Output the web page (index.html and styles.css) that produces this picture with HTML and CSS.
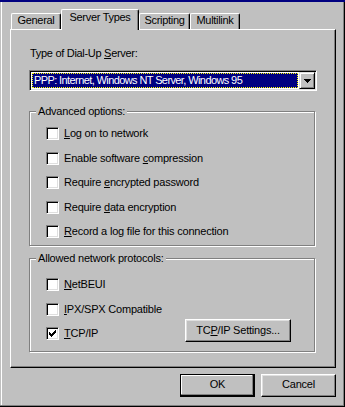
FILE: index.html
```html
<!DOCTYPE html>
<html>
<head>
<meta charset="utf-8">
<link rel="stylesheet" href="styles.css">
</head>
<body>
<div class="window">
  <div class="titlebar"></div>
  <div class="client">
    <div class="tabs">
      <div class="tab tab-general">General</div>
      <div class="tab tab-server active">Server Types</div>
      <div class="tab tab-scripting">Scripting</div>
      <div class="tab tab-multilink">Multilink</div>
    </div>
    <div class="panel">
      <div class="field-label">Type of Dial-Up <u>S</u>erver:</div>
      <div class="combo">
        <div class="combo-field"><span class="combo-sel">PPP: Internet, Windows NT Server, Windows 95</span></div>
        <div class="combo-btn"><svg width="7" height="4" viewBox="0 0 7 4" shape-rendering="crispEdges"><path d="M0 0H7V1H6V2H5V3H4V4H3V3H2V2H1V1H0Z" fill="#000"/></svg></div>
      </div>
      <div class="group group-adv">
        <div class="group-title">Advanced options:</div>
        <div class="rows">
          <div class="row"><span class="cb"></span><span class="cb-label"><u>L</u>og on to network</span></div>
          <div class="row"><span class="cb"></span><span class="cb-label">Enable software <u>c</u>ompression</span></div>
          <div class="row"><span class="cb"></span><span class="cb-label">Require <u>e</u>ncrypted password</span></div>
          <div class="row"><span class="cb"></span><span class="cb-label">Require <u>d</u>ata encryption</span></div>
          <div class="row"><span class="cb"></span><span class="cb-label"><u>R</u>ecord a log file for this connection</span></div>
        </div>
      </div>
      <div class="group group-proto">
        <div class="group-title">Allowed network protocols:</div>
        <div class="rows">
          <div class="row"><span class="cb"></span><span class="cb-label"><u>N</u>etBEUI</span></div>
          <div class="row"><span class="cb"></span><span class="cb-label"><u>I</u>PX/SPX Compatible</span></div>
          <div class="row"><span class="cb"><svg width="7" height="7" viewBox="0 0 7 7" shape-rendering="crispEdges"><path d="M6 0H7V3H6V4H5V5H4V6H3V7H2V6H1V5H0V2H1V3H2V4H3V3H4V2H5V1H6Z" fill="#000"/></svg></span><span class="cb-label"><u>T</u>CP/IP</span><span class="btn btn-settings">TC<u>P</u>/IP Settings...</span></div>
        </div>
      </div>
    </div>
    <div class="actions">
      <span class="btn btn-dialog btn-default">OK</span>
      <span class="btn btn-dialog">Cancel</span>
    </div>
  </div>
</div>
</body>
</html>
```
FILE: styles.css
```css
* { box-sizing: border-box; margin: 0; padding: 0; }
html, body { width: 345px; height: 407px; overflow: hidden; background: #c0c0c0; }
body {
  font-family: "Liberation Sans", Arial, sans-serif;
  font-size: 11px;
  line-height: 13px;
  color: #000;
  letter-spacing: -0.2px;
}
u { text-decoration: underline; text-underline-offset: 1px; }

.window {
  width: 345px;
  height: 407px;
  background: #c0c0c0;
  box-shadow: inset -1px -1px 0 #000, inset -2px -2px 0 #808080, inset 1px 0 0 #c0c0c0, inset 2px 0 0 #fff;
  display: flex;
  flex-direction: column;
}
.titlebar { height: 2px; background: #000080; flex: none; }
.client { padding: 7px 9px 0 10px; display: flex; flex-direction: column; }

.tabs {
  display: flex;
  align-items: flex-end;
  height: 20px;
  padding-left: 1px;
  position: relative;
  z-index: 1;
}
.tab {
  height: 16px;
  background: #c0c0c0;
  border-top: 1px solid #fff;
  border-left: 1px solid #fff;
  border-right: 1px solid #000;
  box-shadow: inset -1px 0 0 #808080;
  border-radius: 2px 2px 0 0;
  text-align: center;
  white-space: nowrap;
  letter-spacing: -0.3px;
}
.tab-general { width: 50px; }
.tab-server { width: 78px; }
.tab-scripting { width: 51px; }
.tab-multilink { width: 50px; }
.tab.active { height: 21px; margin-bottom: -1px; padding-top: 1px; }

.panel {
  height: 339px;
  border: 1px solid;
  border-color: #fff #000 #000 #fff;
  box-shadow: inset -1px -1px 0 #808080;
  padding: 17px 0 0 18px;
  display: flex;
  flex-direction: column;
  align-items: flex-start;
}
.field-label { margin-left: 1px; height: 13px; letter-spacing: -0.3px; }

.combo {
  margin-top: 10px;
  width: 288px;
  height: 21px;
  border: 1px solid;
  border-color: #808080 #fff #fff #808080;
  box-shadow: inset 1px 1px 0 #000, inset -1px -1px 0 #dfdfdf;
  padding: 1px;
  background: #fff;
  display: flex;
}
.combo-field { flex: 1; padding: 1px; }
.combo-sel {
  display: block;
  height: 15px;
  background: #000080;
  color: #fff;
  outline: 1px dotted #ffff00;
  outline-offset: -1px;
  padding: 0 0 0 2px;
  line-height: 14px;
  white-space: nowrap;
  letter-spacing: -0.6px;
}
.combo-btn {
  width: 16px;
  height: 17px;
  background: #c0c0c0;
  border: 1px solid;
  border-color: #dfdfdf #000 #000 #dfdfdf;
  box-shadow: inset 1px 1px 0 #fff, inset -1px -1px 0 #808080;
  display: flex;
  align-items: center;
  justify-content: center;
}
.combo-btn svg { display: block; }

.group {
  width: 286px;
  border: 1px solid #808080;
  box-shadow: inset 1px 1px 0 #fff, 1px 1px 0 #fff;
  padding: 0 0 0 16px;
  display: flex;
  flex-direction: column;
  align-items: flex-start;
}
.group-title {
  margin: -7px 0 0 -10px;
  padding: 0 2px 0 2px;
  background: #c0c0c0;
  height: 13px;
  white-space: nowrap;
}
.group-adv { margin-top: 20px; padding-bottom: 7px; }
.group-adv .rows { margin-top: 9px; }
.group-proto { margin-top: 12px; padding-bottom: 11px; }
.group-proto .rows { margin-top: 13px; }

.rows { display: flex; flex-direction: column; gap: 11.5px; align-self: stretch; }
.row { display: flex; align-items: center; height: 13px; }
.cb {
  width: 13px;
  height: 13px;
  flex: none;
  background: #fff;
  border: 1px solid;
  border-color: #808080 #fff #fff #808080;
  box-shadow: inset 1px 1px 0 #000, inset -1px -1px 0 #dfdfdf;
  display: flex;
  align-items: center;
  justify-content: center;
}
.cb svg { display: block; }
.cb-label { margin-left: 5px; white-space: nowrap; }

.btn {
  display: flex;
  align-items: center;
  justify-content: center;
  background: #c0c0c0;
  border: 1px solid;
  border-color: #fff #000 #000 #fff;
  box-shadow: inset -1px -1px 0 #808080, inset 1px 1px 0 #dfdfdf;
  white-space: nowrap;
}
.btn-settings {
  width: 106px;
  height: 23px;
  margin: -8px 23px -2px auto;
}
.actions {
  display: flex;
  justify-content: flex-end;
  gap: 6px;
  margin-top: 6px;
}
.btn-dialog { width: 75px; height: 23px; padding-bottom: 2px; }
.btn-default {
  border-color: #000;
  box-shadow: inset -1px -1px 0 #000, inset -2px -2px 0 #808080, inset 1px 1px 0 #fff;
}
```
